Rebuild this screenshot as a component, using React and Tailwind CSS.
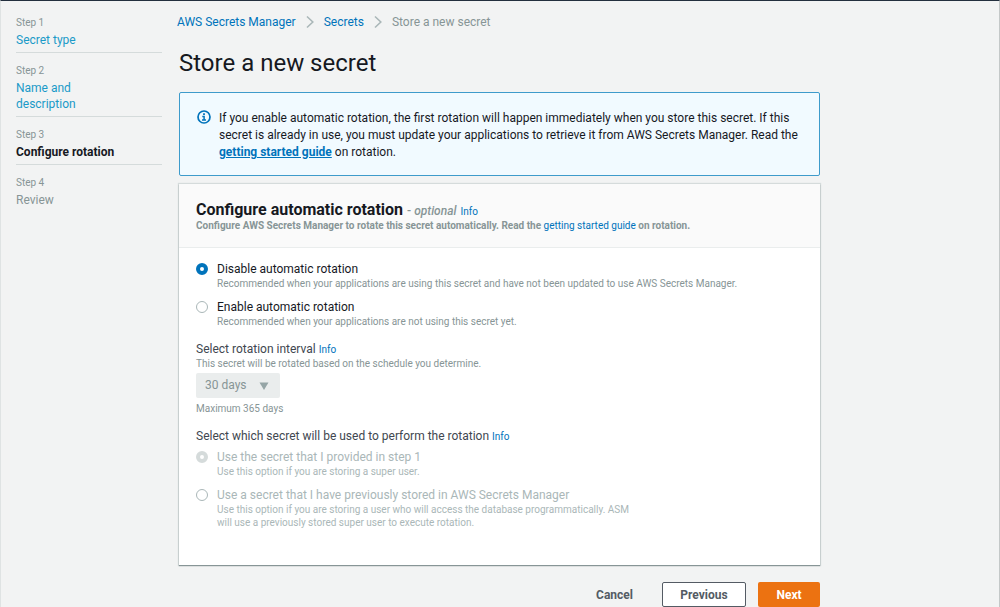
import React from "react";

const steps = [
  { label: "Step 1", title: "Secret type", state: "link" },
  { label: "Step 2", title: "Name and description", state: "link" },
  { label: "Step 3", title: "Configure rotation", state: "current" },
  { label: "Step 4", title: "Review", state: "upcoming" },
];

function StepTitle({ step }) {
  if (step.state === "link") {
    return (
      <a href="#" className="block max-w-24 text-[#1a9ac8]">
        {step.title}
      </a>
    );
  }
  if (step.state === "current") {
    return (
      <span aria-current="step" className="block font-bold text-[#16191f]">
        {step.title}
      </span>
    );
  }
  return <span className="block text-[#879596]">{step.title}</span>;
}

function Steps() {
  return (
    <nav aria-label="Steps" className="w-[146px] shrink-0 pt-[14px]">
      <ol className="flex flex-col gap-[10px]">
        {steps.map((step) => (
          <li
            key={step.label}
            className="flex flex-col gap-px border-b border-[#d5dbdb] pb-1 text-[12px] leading-4 last:border-b-0"
          >
            <span className="text-[10px] text-[#879596]">{step.label}</span>
            <StepTitle step={step} />
          </li>
        ))}
      </ol>
    </nav>
  );
}

function Chevron() {
  return (
    <svg viewBox="0 0 8 14" className="h-3.5 w-2" fill="none" stroke="#aab7b8" strokeWidth="1.6" aria-hidden="true">
      <path d="M1 1.5 L6.8 7 L1 12.5" />
    </svg>
  );
}

function Breadcrumbs() {
  return (
    <nav aria-label="Breadcrumbs" className="pt-[13px] text-[12px] leading-4">
      <ol className="-ml-0.5 flex items-center gap-[10px]">
        <li><a href="#" className="text-[#0073bb]">AWS Secrets Manager</a></li>
        <li><Chevron /></li>
        <li><a href="#" className="text-[#0073bb]">Secrets</a></li>
        <li><Chevron /></li>
        <li className="text-[#879596]">Store a new secret</li>
      </ol>
    </nav>
  );
}

function InfoIcon() {
  return (
    <svg viewBox="0 0 14 14" className="h-3.5 w-3.5 shrink-0" fill="none" stroke="#0073bb" aria-hidden="true">
      <circle cx="7" cy="7" r="6" strokeWidth="1.7" />
      <path d="M7 3.2 V4.9" strokeWidth="1.8" />
      <path d="M5.3 6.5 H7.1 V10 M5 10.1 H9" strokeWidth="1.5" />
    </svg>
  );
}

function InfoLink() {
  return <a href="#" className="text-[10px] leading-none font-normal text-[#0073bb]">Info</a>;
}

function Option({ id, name, label, description, defaultChecked, disabled }) {
  return (
    <div className="flex gap-[9px]">
      <input
        type="radio"
        id={id}
        name={name}
        defaultChecked={defaultChecked}
        disabled={disabled}
        className="mt-0.5 h-3 w-3 shrink-0 appearance-none rounded-full border border-[#aab7b8] bg-white checked:border-4 checked:border-[#0073bb] disabled:checked:border-[#d5dbdb]"
      />
      <div className={disabled ? "text-[#aab7b8]" : "text-[#879596]"}>
        <label
          htmlFor={id}
          className={disabled ? "block text-[12px] leading-4" : "block text-[12px] leading-4 text-[#16191f]"}
        >
          {label}
        </label>
        <p className="text-[10px] leading-[13px]">{description}</p>
      </div>
    </div>
  );
}

export default function App() {
  return (
    <div className="min-h-screen border-t border-r border-l border-t-[#232f3e] border-r-[#c4c8c8] border-l-[#dfe3e3] bg-[#f2f3f3] font-['Roboto',sans-serif] text-[#16191f]">
      <div className="flex gap-[17px] pl-[15px]">
        <Steps />
        <main className="max-w-[641px] grow">
          <Breadcrumbs />
          <h1 className="mt-[17px] text-[24px] leading-8">Store a new secret</h1>

          <section className="mt-[13px] flex gap-2 rounded-xs border border-[#3e9bcb] bg-[#f1faff] px-[17px] pt-[17px] pb-[14px]">
            <InfoIcon />
            <p className="text-[12px] leading-[17px]">
              If you enable automatic rotation, the first rotation will happen immediately when you store this secret. If this
              secret is already in use, you must update your applications to retrieve it from AWS Secrets Manager. Read the{" "}
              <a href="#" className="font-bold text-[#0073bb] underline">getting started guide</a> on rotation.
            </p>
          </section>

          <form>
            <section className="mt-2 bg-white shadow-[0_1px_1px_0_#879596,0_0_1px_1px_#d5dbdb]">
              <header className="border-b border-[#eaeded] bg-[#fafafa] px-[17px] pt-[17px] pb-[15px]">
                <h2 className="text-[16px] leading-[18px] font-bold">
                  Configure automatic rotation{" "}
                  <span className="text-[12px] leading-none font-medium text-[#879596]">
                    - <i>optional</i>
                  </span>{" "}
                  <InfoLink />
                </h2>
                <p className="text-[10px] leading-[13px] font-bold text-[#879596]">
                  Configure AWS Secrets Manager to rotate this secret automatically. Read the{" "}
                  <a href="#" className="font-normal text-[#0073bb]">getting started guide</a> on rotation.
                </p>
              </header>

              <div className="px-[17px] pt-[13px] pb-9">
                <div role="radiogroup" aria-label="Automatic rotation" className="flex flex-col gap-[9px]">
                  <Option
                    id="rotation-off"
                    name="rotation"
                    defaultChecked
                    label="Disable automatic rotation"
                    description="Recommended when your applications are using this secret and have not been updated to use AWS Secrets Manager."
                  />
                  <Option
                    id="rotation-on"
                    name="rotation"
                    label="Enable automatic rotation"
                    description="Recommended when your applications are not using this secret yet."
                  />
                </div>

                <div className="mt-[13px] text-[10px] leading-[13px] text-[#879596]">
                  <div className="text-[12px] leading-4 text-[#414750]">
                    <label htmlFor="interval">Select rotation interval</label> <InfoLink />
                  </div>
                  <p>This secret will be rotated based on the schedule you determine.</p>
                  <div className="mt-[3px] grid w-[84px] items-center">
                    <select
                      id="interval"
                      disabled
                      className="col-start-1 row-start-1 h-[25px] appearance-none rounded-xs bg-[#eaeded] pl-[9px] text-[12px] text-[#879596] opacity-100"
                    >
                      <option>30 days</option>
                    </select>
                    <svg viewBox="0 0 10 8" className="col-start-1 row-start-1 mr-[11px] h-2 w-2.5 justify-self-end" fill="#95a5a6" aria-hidden="true">
                      <path d="M0.5 0.5 H9.5 L5 8 Z" />
                    </svg>
                  </div>
                  <p className="mt-1">Maximum 365 days</p>
                </div>

                <fieldset className="mt-[13px]">
                  <legend className="text-[12px] leading-4 text-[#414750]">
                    Select which secret will be used to perform the rotation <InfoLink />
                  </legend>
                  <div className="mt-[5px] flex max-w-[450px] flex-col gap-[9px]">
                    <Option
                      id="secret-same"
                      name="secret"
                      defaultChecked
                      disabled
                      label="Use the secret that I provided in step 1"
                      description="Use this option if you are storing a super user."
                    />
                    <Option
                      id="secret-other"
                      name="secret"
                      disabled
                      label="Use a secret that I have previously stored in AWS Secrets Manager"
                      description="Use this option if you are storing a user who will access the database programmatically. ASM will use a previously stored super user to execute rotation."
                    />
                  </div>
                </fieldset>
              </div>
            </section>

            <div className="mt-[17px] flex justify-end text-[12px] leading-4 font-bold text-[#545b64]">
              <button type="button" className="mr-[13px] h-[25px] px-4">Cancel</button>
              <button type="button" className="mr-3 h-[25px] w-[84px] rounded-xs border border-[#545b64] bg-white">Previous</button>
              <button type="submit" className="h-[25px] w-[62px] rounded-xs bg-[#ec7211] text-white">Next</button>
            </div>
          </form>
        </main>
      </div>
    </div>
  );
}
